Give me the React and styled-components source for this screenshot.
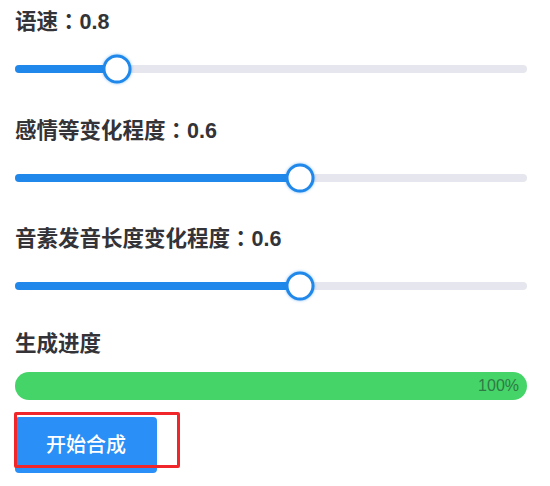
import React from "react";
import styled, { createGlobalStyle } from "styled-components";

const Global = createGlobalStyle`
  html, body { margin: 0; padding: 0; background: #ffffff; }
  body { font-family: "Liberation Sans", "Noto Sans CJK SC", sans-serif; }
`;

const Page = styled.div`
  display: flex;
  flex-direction: column;
  padding: 6px 23px 0 15px;
  width: 550px;
  box-sizing: border-box;
`;

const Section = styled.section`
  display: flex;
  flex-direction: column;
  gap: ${(p) => p.$gap}px;
  margin-bottom: ${(p) => p.$after}px;
`;

const Label = styled.div`
  font-family: "Liberation Sans", "Noto Sans CJK SC", sans-serif;
  font-size: 21.5px;
  line-height: 28px;
  height: 28px;
  font-weight: 600;
  color: #333338;
  white-space: nowrap;
`;

const Colon = styled.span`
  font-family: "Noto Sans CJK TC", sans-serif;
`;

const SliderRow = styled.div`
  position: relative;
  height: 30px;
  display: flex;
  align-items: center;
`;

const Track = styled.div`
  position: relative;
  flex: 1;
  height: 8px;
  border-radius: 4px;
  background: #e6e6ee;
`;

const Fill = styled.div`
  height: 100%;
  border-radius: 4px;
  background: #1f88ea;
`;

const Thumb = styled.div`
  position: absolute;
  top: 50%;
  width: 29px;
  height: 29px;
  box-sizing: border-box;
  border-radius: 50%;
  background: #ffffff;
  border: 3px solid #1f88ea;
  box-shadow: 0 0 3px rgba(31, 136, 234, 0.55);
  transform: translate(-50%, -50%);
`;

const Progress = styled.div`
  position: relative;
  height: 28px;
  border-radius: 14px;
  background: #45d468;
  display: flex;
  align-items: center;
  justify-content: flex-end;
  padding-right: 8px;
`;

const Percent = styled.span`
  font-family: "Liberation Sans", sans-serif;
  font-size: 16px;
  color: #2f7a45;
`;

const ButtonWrap = styled.div`
  position: relative;
  align-self: flex-start;
  margin-top: 17px;
`;

const StartButton = styled.button`
  width: 142px;
  height: 56px;
  border: none;
  border-radius: 4px;
  background: #2a8ff6;
  color: #ffffff;
  font-family: "Noto Sans CJK SC", sans-serif;
  font-size: 20px;
  font-weight: 500;
  padding: 0 0 4px 0;
`;

const Highlight = styled.div`
  position: absolute;
  left: -1px;
  top: -5px;
  width: 166px;
  height: 56px;
  box-sizing: border-box;
  border: 3px solid #f0262a;
  border-radius: 2px;
  pointer-events: none;
`;

const sliders = [
  { name: "语速", value: "0.8", pct: 0.2, after: 31 },
  { name: "感情等变化程度", value: "0.6", pct: 0.557, after: 30 },
  { name: "音素发音长度变化程度", value: "0.6", pct: 0.557, after: 29 },
];

function Slider({ pct }) {
  return (
    <SliderRow>
      <Track>
        <Fill style={{ width: `${pct * 100}%` }} />
        <Thumb style={{ left: `${pct * 100}%` }} />
      </Track>
    </SliderRow>
  );
}

export default function App() {
  return (
    <>
      <Global />
      <Page>
        {sliders.map((s) => (
          <Section key={s.name} $gap={20} $after={s.after}>
            <Label>
              {s.name}
              <Colon>：</Colon>
              {s.value}
            </Label>
            <Slider pct={s.pct} />
          </Section>
        ))}
        <Section $gap={14} $after={0}>
          <Label>生成进度</Label>
          <Progress>
            <Percent>100%</Percent>
          </Progress>
        </Section>
        <ButtonWrap>
          <StartButton>开始合成</StartButton>
          <Highlight />
        </ButtonWrap>
      </Page>
    </>
  );
}
